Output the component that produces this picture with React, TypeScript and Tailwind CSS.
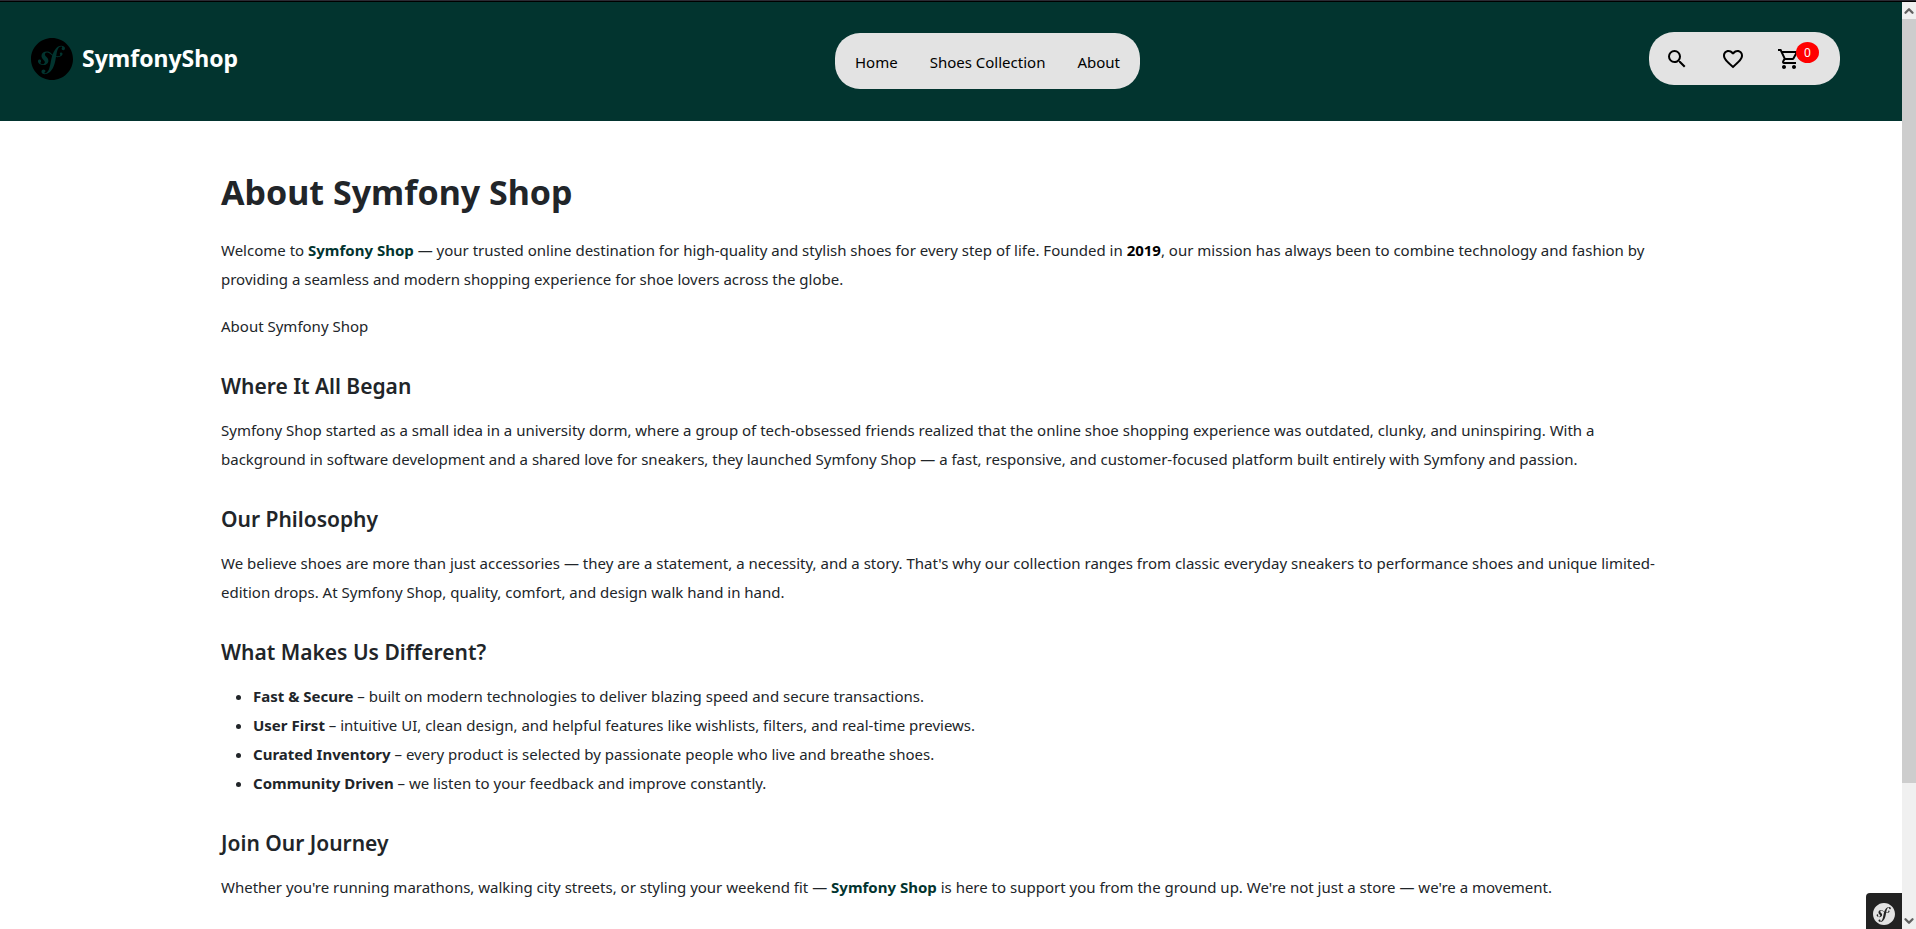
import type { ReactNode } from "react";
import { MdFavoriteBorder, MdOutlineShoppingCart, MdSearch } from "react-icons/md";
import { SiSymfony } from "react-icons/si";
import { ChevronDown, ChevronUp } from "lucide-react";

const links = ["Home", "Shoes Collection", "About"];

const features = [
  { name: "Fast & Secure", text: "built on modern technologies to deliver blazing speed and secure transactions." },
  { name: "User First", text: "intuitive UI, clean design, and helpful features like wishlists, filters, and real-time previews." },
  { name: "Curated Inventory", text: "every product is selected by passionate people who live and breathe shoes." },
  { name: "Community Driven", text: "we listen to your feedback and improve constantly." },
];

function Header() {
  return (
    <header className="flex h-[119px] shrink-0 items-start justify-between bg-[#02342f] pl-[31px] pr-[62px] pt-[30px]">
      <a href="#" className="flex w-[295px] items-start gap-[9px] pt-[6px] text-white">
        <SiSymfony className="size-[42px] text-black" aria-hidden="true" />
        <span className="text-[23px] leading-10 font-bold">SymfonyShop</span>
      </a>
      <nav className="mt-px flex h-14 items-center gap-8 rounded-[25px] bg-[#e3e3e3] px-5 pt-[2px] text-black">
        {links.map((link) => (
          <a key={link} href="#" className="whitespace-nowrap">
            {link}
          </a>
        ))}
      </nav>
      <div className="flex h-[53px] w-[191px] items-center gap-8 rounded-[25px] bg-[#e3e3e3] pl-4 text-black">
        <button type="button" aria-label="Search">
          <MdSearch className="size-6" />
        </button>
        <button type="button" aria-label="Wishlist">
          <MdFavoriteBorder className="size-6" />
        </button>
        <button type="button" aria-label="Cart" className="relative">
          <MdOutlineShoppingCart className="size-6" />
          <span className="absolute -top-[5px] left-[19px] flex h-[21px] w-[23px] items-center justify-center rounded-[50%] bg-[#ff0000] pt-px text-[12px] leading-none text-white">
            0
          </span>
        </button>
      </div>
    </header>
  );
}

function Section({ title, children }: { title: string; children: ReactNode }) {
  return (
    <section className="mt-[31px]">
      <h2 className="mb-4 text-[21px] leading-7 font-semibold">{title}</h2>
      {children}
    </section>
  );
}

function Scrollbar() {
  return (
    <div className="flex w-[14px] shrink-0 flex-col bg-[#f0f0f0] text-[#606060]" aria-hidden="true">
      <div className="flex h-[17px] items-center justify-center">
        <ChevronUp className="size-[14px]" strokeWidth={4} />
      </div>
      <div className="flex-[764] bg-[#cdcdcd]" />
      <div className="flex-[129]" />
      <div className="flex h-[17px] items-center justify-center">
        <ChevronDown className="size-[14px]" strokeWidth={4} />
      </div>
    </div>
  );
}

export default function App() {
  return (
    <div className="flex h-screen flex-col overflow-hidden bg-white font-['Noto_Sans','Open_Sans',sans-serif] text-[15px] leading-[29px] text-[#212529]">
      <div className="h-[2px] shrink-0 border-b border-black bg-[#2b2a33]" />
      <div className="flex min-h-0 flex-1">
        <div className="flex min-w-0 flex-1 flex-col">
          <Header />
          <main className="mx-auto w-full max-w-[1500px] px-5 pt-[47px]">
            <h1 className="mb-5 text-[34px] leading-[48px] font-bold">About Symfony Shop</h1>
            <p className="mb-[18px]">
              Welcome to <strong className="text-[#02342f]">Symfony Shop</strong> — your trusted online destination for
              high-quality and stylish shoes for every step of life. Founded in{" "}
              <strong className="text-black">2019</strong>, our mission has always been to combine technology and
              fashion by providing a seamless and modern shopping experience for shoe lovers across the globe.
            </p>
            <p>About Symfony Shop</p>
            <Section title="Where It All Began">
              <p>
                Symfony Shop started as a small idea in a university dorm, where a group of tech-obsessed friends
                realized that the online shoe shopping experience was outdated, clunky, and uninspiring. With a
                background in software development and a shared love for sneakers, they launched Symfony Shop — a fast,
                responsive, and customer-focused platform built entirely with Symfony and passion.
              </p>
            </Section>
            <Section title="Our Philosophy">
              <p>
                We believe shoes are more than just accessories — they are a statement, a necessity, and a story.
                That's why our collection ranges from classic everyday sneakers to performance shoes and unique
                limited-edition drops. At Symfony Shop, quality, comfort, and design walk hand in hand.
              </p>
            </Section>
            <Section title="What Makes Us Different?">
              <ul className="list-disc pl-8">
                {features.map((feature) => (
                  <li key={feature.name}>
                    <strong>{feature.name}</strong> – {feature.text}
                  </li>
                ))}
              </ul>
            </Section>
            <Section title="Join Our Journey">
              <p>
                Whether you're running marathons, walking city streets, or styling your weekend fit —{" "}
                <strong className="text-[#02342f]">Symfony Shop</strong> is here to support you from the ground up.
                We're not just a store — we're a movement.
              </p>
            </Section>
          </main>
        </div>
        <Scrollbar />
      </div>
      <button
        type="button"
        aria-label="Open Symfony toolbar"
        className="fixed right-[14px] bottom-0 flex h-9 w-9 items-end justify-center rounded-tl bg-[#222222] pb-1 text-[#e3e3e3]"
      >
        <SiSymfony className="size-[22px]" />
      </button>
    </div>
  );
}
